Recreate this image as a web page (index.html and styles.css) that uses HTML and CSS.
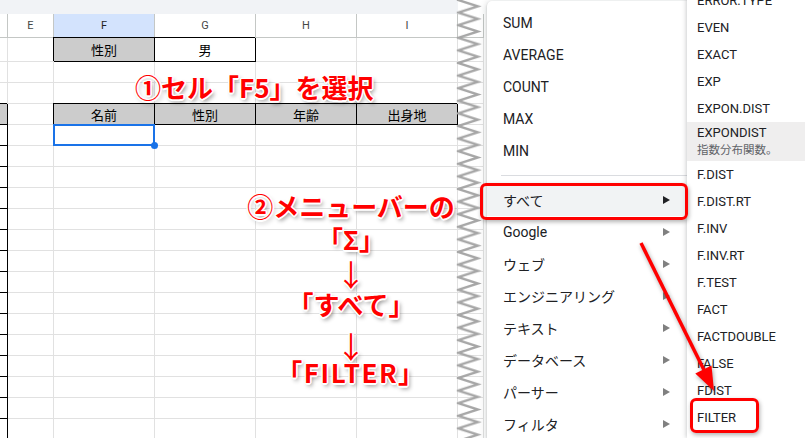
FILE: index.html
```html
<!DOCTYPE html>
<html lang="ja">
<head>
    <meta charset="UTF-8">
    <title>FILTER関数の挿入</title>
    <link rel="stylesheet" href="styles.css">
</head>
<body>
<div class="screen">
    <div class="sheet">
        <div class="topbar"></div>
        <div class="grid">
            <div class="h"></div><div class="h">E</div><div class="h on">F</div><div class="h">G</div><div class="h">H</div><div class="h">I</div><div class="h"></div>
            <div></div><div></div><div class="bk gr">性別</div><div class="bk">男</div><div></div><div></div><div></div>
            <div></div><div></div><div></div><div></div><div></div><div></div><div></div>
            <div></div><div></div><div></div><div></div><div></div><div></div><div></div>
            <div class="bk gr"></div><div></div><div class="bk gr">名前</div><div class="bk gr">性別</div><div class="bk gr">年齢</div><div class="bk gr">出身地</div><div></div>
            <div class="bk"></div><div></div><div class="cur"><span class="knob"></span></div><div></div><div></div><div></div><div></div>
            <div class="bk"></div><div></div><div></div><div></div><div></div><div></div><div></div>
            <div class="bk"></div><div></div><div></div><div></div><div></div><div></div><div></div>
            <div class="bk"></div><div></div><div></div><div></div><div></div><div></div><div></div>
            <div class="bk"></div><div></div><div></div><div></div><div></div><div></div><div></div>
            <div class="bk"></div><div></div><div></div><div></div><div></div><div></div><div></div>
            <div class="bk"></div><div></div><div></div><div></div><div></div><div></div><div></div>
            <div class="bk"></div><div></div><div></div><div></div><div></div><div></div><div></div>
            <div class="bk"></div><div></div><div></div><div></div><div></div><div></div><div></div>
            <div class="bk"></div><div></div><div></div><div></div><div></div><div></div><div></div>
            <div class="bk"></div><div></div><div></div><div></div><div></div><div></div><div></div>
            <div class="bk"></div><div></div><div></div><div></div><div></div><div></div><div></div>
            <div class="bk"></div><div></div><div></div><div></div><div></div><div></div><div></div>
            <div class="bk"></div><div></div><div></div><div></div><div></div><div></div><div></div>
            <div class="bk"></div><div></div><div></div><div></div><div></div><div></div><div></div>
        </div>
    </div>

    <div class="menu">
        <div class="item">SUM</div>
        <div class="item">AVERAGE</div>
        <div class="item">COUNT</div>
        <div class="item">MAX</div>
        <div class="item">MIN</div>
        <div class="sep"></div>
        <div class="item hover">すべて<span class="tri"></span></div>
        <div class="item">Google<span class="tri"></span></div>
        <div class="item">ウェブ<span class="tri"></span></div>
        <div class="item">エンジニアリング<span class="tri"></span></div>
        <div class="item">テキスト<span class="tri"></span></div>
        <div class="item">データベース<span class="tri"></span></div>
        <div class="item">パーサー<span class="tri"></span></div>
        <div class="item">フィルタ<span class="tri"></span></div>
    </div>

    <div class="sub">
        <div class="fn">ERROR.TYPE</div>
        <div class="fn">EVEN</div>
        <div class="fn">EXACT</div>
        <div class="fn">EXP</div>
        <div class="fn">EXPON.DIST</div>
        <div class="fn hl">
            <div class="fn-name">EXPONDIST</div>
            <div class="fn-desc">指数分布関数。</div>
        </div>
        <div class="fn">F.DIST</div>
        <div class="fn">F.DIST.RT</div>
        <div class="fn">F.INV</div>
        <div class="fn">F.INV.RT</div>
        <div class="fn">F.TEST</div>
        <div class="fn">FACT</div>
        <div class="fn">FACTDOUBLE</div>
        <div class="fn">FALSE</div>
        <div class="fn">FDIST</div>
        <div class="fn">FILTER</div>
    </div>

    <!-- 注釈 -->
    <svg class="tear" width="27" height="438">
        <defs>
            <pattern id="zz" width="27" height="12.6" patternUnits="userSpaceOnUse">
                <path d="M2 -0.4 L23 6.3 L2 13" fill="none" stroke="#a6a6a6" stroke-width="2.3"/>
            </pattern>
        </defs>
        <rect width="27" height="438" fill="url(#zz)"/>
    </svg>

    <div class="mark mark-all"></div>
    <div class="mark mark-fn"></div>

    <svg class="pointer" width="805" height="438">
        <line x1="641" y1="243" x2="705" y2="372" stroke="#ff0000" stroke-width="3.5"/>
        <polygon points="714,391 711.5,365.5 695.3,373.5" fill="#ff0000"/>
    </svg>

    <div class="note note1">①セル「F5」を選択</div>
    <div class="note note2">
        <div class="ln">②メニューバーの</div>
        <div class="ln s2">「Σ」</div>
        <div class="ln arrow a1">↓</div>
        <div class="ln s4">「すべて」</div>
        <div class="ln arrow a2">↓</div>
        <div class="ln wide">「FILTER」</div>
    </div>
</div>
</body>
</html>
```

FILE: styles.css
```css
* {
    box-sizing: border-box;
}

body {
    margin: 0;
    background: #fff;
    font-family: Roboto, "Noto Sans CJK JP", sans-serif;
    overflow: hidden;
}

.screen {
    position: relative;
    display: flex;
    width: 805px;
    height: 438px;
    overflow: hidden;
}

/* シート */
.sheet {
    flex: none;
    width: 487px;
    background: #fff;
}

.topbar {
    width: 458px;
    height: 14px;
    background: #f1f3f6;
}

.grid {
    display: grid;
    grid-template-columns: 8px 46px 101px 101px 101px 101px 26px;
    grid-template-rows: 24px 24px;
    grid-auto-rows: 21px;
}

.grid > div {
    display: flex;
    align-items: center;
    justify-content: center;
    border-right: 1px solid #e1e1e1;
    border-bottom: 1px solid #e1e1e1;
    font-family: "Noto Sans CJK JP", sans-serif;
    font-size: 13px;
    color: #000;
}

.grid > .h {
    border-color: #c4c7c5;
    font-family: Roboto, sans-serif;
    font-size: 11px;
    color: #444746;
}

.grid > .h.on {
    background: #d3e3fd;
    color: #1f1f1f;
}

.grid > .bk {
    border-color: #000;
    box-shadow: -1px -1px 0 #000;
}

.grid > .gr {
    background: #ccc;
}

.grid > .cur {
    position: relative;
}

.cur::after {
    content: "";
    position: absolute;
    left: -1px;
    top: -1px;
    right: -1px;
    bottom: -1px;
    border: 2px solid #1a73e8;
}

.knob {
    position: absolute;
    right: -4px;
    bottom: -4px;
    width: 7px;
    height: 7px;
    border-radius: 50%;
    background: #1a73e8;
    z-index: 1;
}

/* メニュー */
.menu {
    flex: none;
    width: 200px;
    margin-top: 1px;
    padding-top: 6px;
    background: #fff;
    border-radius: 5px 0 0 0;
    box-shadow: 0 1px 2px rgba(60, 64, 67, 0.3), 0 2px 6px 2px rgba(60, 64, 67, 0.15);
}

.item {
    display: flex;
    align-items: center;
    justify-content: space-between;
    height: 32px;
    padding: 0 17px 0 16px;
    font-size: 14px;
    color: #202124;
    white-space: nowrap;
}

.item.hover {
    background: #f1f3f4;
}

.sep {
    height: 1px;
    margin: 8px 0 8px 14px;
    background: #dadce0;
}

.tri {
    width: 0;
    height: 0;
    border-left: 7px solid #808080;
    border-top: 4px solid transparent;
    border-bottom: 4px solid transparent;
}

.hover .tri {
    border-left-color: #202124;
}

.sub {
    position: relative;
    z-index: 1;
    flex: 1;
    margin-top: -13px;
    background: #fff;
    box-shadow: -1px 0 4px rgba(60, 64, 67, 0.25);
}

.fn {
    height: 27px;
    line-height: 27px;
    padding-left: 10px;
    font-size: 13px;
    color: #202124;
    white-space: nowrap;
}

.fn.hl {
    height: 39px;
    padding-top: 2px;
    line-height: normal;
    background: #efeeee;
}

.fn-name {
    line-height: 18px;
}

.fn-desc {
    line-height: 16px;
    font-size: 11.5px;
    color: #5f6368;
}

/* 注釈 */
.tear {
    position: absolute;
    left: 455px;
    top: 0;
    z-index: 2;
}

.mark {
    position: absolute;
    z-index: 3;
    border: 3px solid #ff0000;
    border-radius: 6px;
    box-shadow: 1px 2px 4px rgba(0, 0, 0, 0.3);
}

.mark-all {
    left: 480px;
    top: 183px;
    width: 208px;
    height: 37px;
}

.mark-fn {
    left: 690px;
    top: 398px;
    width: 69px;
    height: 35px;
}

.pointer {
    position: absolute;
    left: 0;
    top: 0;
    z-index: 3;
    pointer-events: none;
    filter: drop-shadow(1px 2px 2px rgba(0, 0, 0, 0.35));
}

.note {
    position: absolute;
    z-index: 4;
    color: #ff0000;
    font-family: "Noto Sans CJK JP", sans-serif;
    font-weight: 700;
    font-size: 26px;
    white-space: nowrap;
    text-shadow: -1.5px 0 #fff, 1.5px 0 #fff, 0 -1.5px #fff, 0 1.5px #fff,
        -1px -1px #fff, 1px 1px #fff, 1px -1px #fff, -1px 1px #fff,
        2px 3px 4px rgba(0, 0, 0, 0.45);
}

.note1 {
    left: 135px;
    top: 70px;
    line-height: 33px;
}

.note2 {
    left: 246px;
    top: 193px;
    width: 210px;
    text-align: center;
}

.ln {
    height: 26px;
    margin-bottom: 7px;
    line-height: 26px;
}

.ln.s2 {
    margin-bottom: 6px;
}

.ln.arrow {
    font-size: 30px;
    font-weight: 400;
}

.ln.a1 {
    height: 30px;
    margin-bottom: 3px;
    line-height: 30px;
}

.ln.s4 {
    margin-bottom: 14px;
}

.ln.a2 {
    height: 28px;
    margin-bottom: 0;
    line-height: 28px;
}

.ln.wide {
    letter-spacing: 1.5px;
}
```
